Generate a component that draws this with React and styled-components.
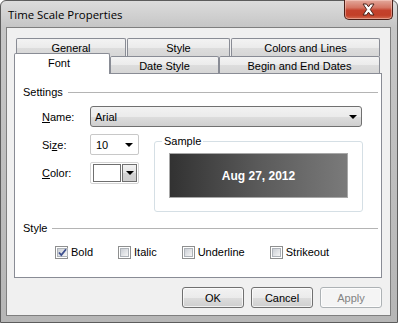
import React from "react";
import styled, { createGlobalStyle } from "styled-components";

const GlobalStyle = createGlobalStyle`
  html, body { margin: 0; padding: 0; background: #ffffff; }
  body {
    font-family: "Liberation Sans", Arial, sans-serif;
    font-size: 11px;
    color: #000;
  }
  * { box-sizing: border-box; }
`;

const Window = styled.div`
  width: 398px;
  height: 323px;
  display: flex;
  flex-direction: column;
  border: 1px solid #5c5c5c;
  border-radius: 6px 6px 0 0;
  padding: 0 6px 6px 5px;
  background: linear-gradient(#dcdcdc, #c6c6c6 26px, #bdbdbd 60%, #b6b6b6);
`;

const TitleBar = styled.div`
  height: 27px;
  display: flex;
  justify-content: space-between;
  align-items: flex-start;
`;

const Title = styled.div`
  font-family: "Open Sans", "Noto Sans", sans-serif;
  font-size: 11.4px;
  padding: 6px 0 0 2px;
  color: #000;
`;

const CloseButton = styled.div`
  width: 49px;
  height: 20px;
  margin: -1px -2px 0 0;
  border: 1px solid #4b1f18;
  border-top: none;
  border-radius: 0 0 5px 5px;
  background: linear-gradient(#e3a99c, #d47563 40%, #c4412c 55%, #c23f28 80%, #d36a4f);
  display: flex;
  align-items: center;
  justify-content: center;
  box-shadow: inset 0 0 0 1px rgba(255, 220, 210, 0.45);
`;

const Client = styled.div`
  flex: 1;
  display: flex;
  flex-direction: column;
  border: 1px solid #7f7f7f;
  background: #f0f0f0;
  padding: 10px 8px 7px 7px;
`;

const TabStrip = styled.div`
  display: flex;
  flex-direction: column;
`;

const TabRow = styled.div`
  display: flex;
  gap: ${(p) => p.$gap}px;
  height: ${(p) => p.$height}px;
  padding-left: ${(p) => p.$inset}px;
`;

const Tab = styled.div`
  width: ${(p) => p.$width}px;
  height: 100%;
  border: 1px solid #898c95;
  border-bottom: none;
  border-radius: 2px 2px 0 0;
  background: linear-gradient(#f3f3f3, #ebebeb 50%, #dddddd 51%, #d6d6d6);
  display: flex;
  align-items: center;
  justify-content: center;
  padding-top: 1px;
`;

const ActiveTab = styled(Tab)`
  position: relative;
  z-index: 1;
  height: calc(100% + 4px);
  margin-top: -3px;
  background: #ffffff;
  align-items: flex-start;
  padding: 3px 6px 0 0;
`;

const Panel = styled.div`
  height: 205px;
  border: 1px solid #898c95;
  background: #ffffff;
  display: flex;
  flex-direction: column;
  padding: 0 3px 0 8px;
`;

const SectionHeader = styled.div`
  display: flex;
  align-items: center;
  gap: 5px;
  line-height: 13px;
  margin-top: ${(p) => p.$top}px;
  &::after {
    content: "";
    flex: 1;
    height: 1px;
    background: #b4b4b4;
  }
`;

const SettingsBody = styled.div`
  display: flex;
  flex-direction: column;
  padding-left: 19px;
`;

const FieldRow = styled.div`
  display: flex;
  align-items: center;
  margin-top: 7px;
`;

const Label = styled.span`
  width: 48px;
  u { text-decoration: underline; }
`;

const Arrow = styled.span`
  width: 0;
  height: 0;
  border-left: 4px solid transparent;
  border-right: 4px solid transparent;
  border-top: 4px solid #000;
`;

const NameCombo = styled.div`
  width: 272px;
  height: 21px;
  border: 1px solid #707070;
  border-radius: 3px;
  background: linear-gradient(#f2f2f2, #ebebeb 50%, #dddddd 51%, #cfcfcf);
  display: flex;
  align-items: center;
  justify-content: space-between;
  padding: 0 4px 0 4px;
`;

const SizeCombo = styled.div`
  width: 49px;
  height: 21px;
  border: 1px solid #c8c8c8;
  border-radius: 2px;
  background: #ffffff;
  display: flex;
  align-items: center;
  justify-content: space-between;
  padding: 0 5px 0 5px;
`;

const ColorPicker = styled.div`
  width: 49px;
  height: 22px;
  border: 1px solid #d4d4d4;
  border-radius: 2px;
  background: #ffffff;
  display: flex;
  align-items: center;
  gap: 1px;
  padding: 1px;
`;

const Swatch = styled.div`
  width: 28px;
  height: 18px;
  margin-left: 1px;
  border: 1px solid #6f6f6f;
  background: ${(p) => p.$color};
`;

const SwatchButton = styled.div`
  flex: 1;
  height: 100%;
  border: 1px solid #6f6f6f;
  background: linear-gradient(#f2f2f2, #e4e4e4 50%, #d4d4d4 51%, #cfcfcf);
  display: flex;
  align-items: center;
  justify-content: center;
`;

const LowerRow = styled.div`
  display: flex;
  align-items: flex-start;
`;

const LeftColumn = styled.div`
  display: flex;
  flex-direction: column;
`;

const SampleGroup = styled.fieldset`
  width: 209px;
  margin: 8px 0 0 15px;
  padding: 5px 0 13px 0;
  border: 1px solid #d5dfe5;
  border-radius: 3px;
  display: flex;
  justify-content: center;
  legend {
    margin-left: 7px;
    padding: 0 2px;
    line-height: 13px;
  }
`;

const Preview = styled.div`
  width: 179px;
  height: 45px;
  margin: 0 auto;
  border: 1px solid #a8a8a8;
  background: linear-gradient(to right, #323232, #5a5a5a 50%, #7a7a7a);
  color: #ffffff;
  font-weight: bold;
  font-size: 12px;
  display: flex;
  align-items: center;
  justify-content: center;
`;

const CheckRow = styled.div`
  display: flex;
  gap: 25px;
  padding-left: 32px;
  margin-top: 11px;
`;

const CheckItem = styled.label`
  display: flex;
  align-items: center;
  gap: 3px;
  line-height: 13px;
`;

const CheckBox = styled.span`
  width: 13px;
  height: 13px;
  border: 1px solid #8e8f8f;
  background: #ffffff;
  padding: 1px;
  display: flex;
`;

const CheckInner = styled.span`
  flex: 1;
  background: linear-gradient(135deg, #cbcfd5, #f6f6f6);
  border: 1px solid #aeb3b9;
  display: flex;
  align-items: center;
  justify-content: center;
`;

const ButtonRow = styled.div`
  display: flex;
  justify-content: flex-end;
  gap: 7px;
  margin-top: 9px;
`;

const Button = styled.div`
  width: 62px;
  height: 21px;
  border: 1px solid ${(p) => (p.$disabled ? "#adb2b5" : "#707070")};
  border-radius: 3px;
  background: ${(p) =>
    p.$disabled
      ? "#f4f4f4"
      : "linear-gradient(#f2f2f2, #ebebeb 50%, #dddddd 51%, #cfcfcf)"};
  color: ${(p) => (p.$disabled ? "#838383" : "#000")};
  display: flex;
  align-items: center;
  justify-content: center;
  box-shadow: inset 0 0 0 1px rgba(255, 255, 255, 0.7);
`;

const row1 = [
  { label: "General", width: 110 },
  { label: "Style", width: 103 },
  { label: "Colors and Lines", width: 149 },
];

const row2 = [
  { label: "Date Style", width: 109 },
  { label: "Begin and End Dates", width: 161 },
];

const styles = [
  { label: "Bold", checked: true },
  { label: "Italic", checked: false },
  { label: "Underline", checked: false },
  { label: "Strikeout", checked: false },
];

function Check({ checked }) {
  return (
    <CheckBox>
      <CheckInner>
        {checked && (
          <svg width="9" height="9" viewBox="0 0 9 9">
            <path
              d="M1 4.5 L3.3 7 L8 1.2"
              fill="none"
              stroke="#3d4f8e"
              strokeWidth="1.8"
            />
          </svg>
        )}
      </CheckInner>
    </CheckBox>
  );
}

export default function App() {
  return (
    <>
      <GlobalStyle />
      <Window>
        <TitleBar>
          <Title>Time Scale Properties</Title>
          <CloseButton>
            <svg width="15" height="13" viewBox="0 0 15 13">
              <path
                d="M2 1 L5.5 1 L7.5 3.8 L9.5 1 L13 1 L9.3 6.5 L13 12 L9.5 12 L7.5 9.2 L5.5 12 L2 12 L5.7 6.5 Z"
                fill="#ffffff"
                stroke="#4a221b"
                strokeWidth="1"
              />
            </svg>
          </CloseButton>
        </TitleBar>
        <Client>
          <TabStrip>
            <TabRow $height={18} $inset={2} $gap={1}>
              {row1.map((t) => (
                <Tab key={t.label} $width={t.width}>
                  {t.label}
                </Tab>
              ))}
            </TabRow>
            <TabRow $height={17} $inset={0} $gap={0}>
              <ActiveTab $width={96}>Font</ActiveTab>
              {row2.map((t) => (
                <Tab key={t.label} $width={t.width}>
                  {t.label}
                </Tab>
              ))}
            </TabRow>
          </TabStrip>
          <Panel>
            <SectionHeader $top={12}>Settings</SectionHeader>
            <SettingsBody>
              <FieldRow>
                <Label>
                  <u>N</u>ame:
                </Label>
                <NameCombo>
                  <span>Arial</span>
                  <Arrow />
                </NameCombo>
              </FieldRow>
              <LowerRow>
                <LeftColumn>
                  <FieldRow>
                    <Label>
                      Si<u>z</u>e:
                    </Label>
                    <SizeCombo>
                      <span>10</span>
                      <Arrow />
                    </SizeCombo>
                  </FieldRow>
                  <FieldRow>
                    <Label>
                      <u>C</u>olor:
                    </Label>
                    <ColorPicker>
                      <Swatch $color="#ffffff" />
                      <SwatchButton>
                        <Arrow />
                      </SwatchButton>
                    </ColorPicker>
                  </FieldRow>
                </LeftColumn>
                <SampleGroup>
                  <legend>Sample</legend>
                  <Preview>Aug 27, 2012</Preview>
                </SampleGroup>
              </LowerRow>
            </SettingsBody>
            <SectionHeader $top={10}>Style</SectionHeader>
            <CheckRow>
              {styles.map((s) => (
                <CheckItem key={s.label}>
                  <Check checked={s.checked} />
                  {s.label}
                </CheckItem>
              ))}
            </CheckRow>
          </Panel>
          <ButtonRow>
            <Button>OK</Button>
            <Button>Cancel</Button>
            <Button $disabled>Apply</Button>
          </ButtonRow>
        </Client>
      </Window>
    </>
  );
}
